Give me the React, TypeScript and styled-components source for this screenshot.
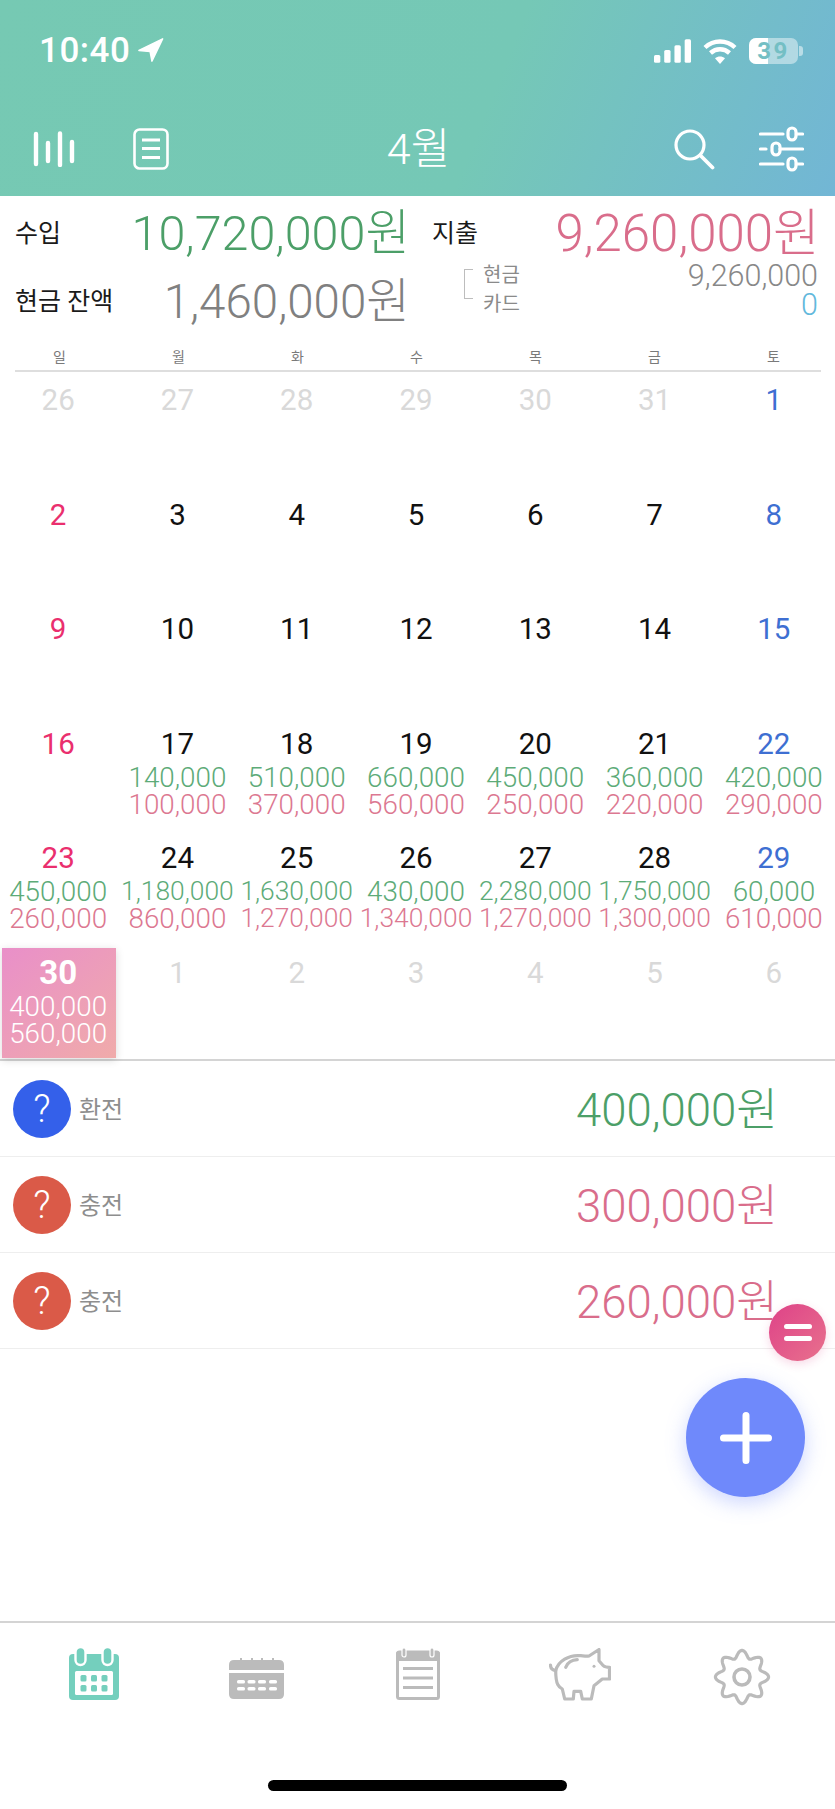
import React from "react";
import styled, { createGlobalStyle } from "styled-components";

type DayKind = "normal" | "sun" | "sat" | "muted";

interface DayData {
  day: number;
  kind: DayKind;
  income?: string;
  expense?: string;
  selected?: boolean;
}

const FONT = `Roboto, "Noto Sans CJK KR", "Liberation Sans", sans-serif`;

const GREEN = "#4c9f68";
const RED = "#d96d8b";

const DAYS: DayData[] = [
  { day: 26, kind: "muted" },
  { day: 27, kind: "muted" },
  { day: 28, kind: "muted" },
  { day: 29, kind: "muted" },
  { day: 30, kind: "muted" },
  { day: 31, kind: "muted" },
  { day: 1, kind: "sat" },
  { day: 2, kind: "sun" },
  { day: 3, kind: "normal" },
  { day: 4, kind: "normal" },
  { day: 5, kind: "normal" },
  { day: 6, kind: "normal" },
  { day: 7, kind: "normal" },
  { day: 8, kind: "sat" },
  { day: 9, kind: "sun" },
  { day: 10, kind: "normal" },
  { day: 11, kind: "normal" },
  { day: 12, kind: "normal" },
  { day: 13, kind: "normal" },
  { day: 14, kind: "normal" },
  { day: 15, kind: "sat" },
  { day: 16, kind: "sun" },
  { day: 17, kind: "normal", income: "140,000", expense: "100,000" },
  { day: 18, kind: "normal", income: "510,000", expense: "370,000" },
  { day: 19, kind: "normal", income: "660,000", expense: "560,000" },
  { day: 20, kind: "normal", income: "450,000", expense: "250,000" },
  { day: 21, kind: "normal", income: "360,000", expense: "220,000" },
  { day: 22, kind: "sat", income: "420,000", expense: "290,000" },
  { day: 23, kind: "sun", income: "450,000", expense: "260,000" },
  { day: 24, kind: "normal", income: "1,180,000", expense: "860,000" },
  { day: 25, kind: "normal", income: "1,630,000", expense: "1,270,000" },
  { day: 26, kind: "normal", income: "430,000", expense: "1,340,000" },
  { day: 27, kind: "normal", income: "2,280,000", expense: "1,270,000" },
  { day: 28, kind: "normal", income: "1,750,000", expense: "1,300,000" },
  { day: 29, kind: "sat", income: "60,000", expense: "610,000" },
  { day: 30, kind: "sun", income: "400,000", expense: "560,000", selected: true },
  { day: 1, kind: "muted" },
  { day: 2, kind: "muted" },
  { day: 3, kind: "muted" },
  { day: 4, kind: "muted" },
  { day: 5, kind: "muted" },
  { day: 6, kind: "muted" },
];

const WEEK = ["일", "월", "화", "수", "목", "금", "토"];

const ENTRIES = [
  { name: "환전", amount: "400,000원", income: true },
  { name: "충전", amount: "300,000원", income: false },
  { name: "충전", amount: "260,000원", income: false },
];

const DAY_COLORS: Record<DayKind, string> = {
  normal: "#111111",
  sun: "#ea2f6e",
  sat: "#3e6fd2",
  muted: "#d9d9d9",
};

// wavy gear outline, 8 lobes
function gearPath() {
  const pts: string[] = [];
  for (let i = 0; i < 160; i++) {
    const a = (i / 160) * Math.PI * 2;
    const r = 23 + 3.6 * Math.cos(a * 8);
    pts.push(`${(29 + r * Math.sin(a)).toFixed(2)},${(29 - r * Math.cos(a)).toFixed(2)}`);
  }
  return `M${pts.join("L")}Z`;
}

function App() {
  return (
    <Page>
      <GlobalStyle />
      <Header>
        <StatusBar>
          <Clock>
            10:40
            <svg width="26" height="26" viewBox="0 0 28 26">
              <path d="M26.5 1 L1 13.5 L13 14.5 L15 25 Z" fill="#fff" stroke="#fff" strokeWidth="1.6" strokeLinejoin="round" />
            </svg>
          </Clock>
          <StatusIcons>
            <svg width="37" height="24" viewBox="0 0 38 24" fill="#fff">
              <rect x="0" y="16" width="6.5" height="8" rx="1.6" />
              <rect x="10.5" y="11" width="6.5" height="13" rx="1.6" />
              <rect x="21" y="6" width="6.5" height="18" rx="1.6" />
              <rect x="31.5" y="0" width="6.5" height="24" rx="1.6" />
            </svg>
            <svg width="34" height="25" viewBox="0 0 34 25" fill="none" stroke="#fff" strokeWidth="4.4">
              <path d="M2 8.5 C10.5 0.5 23.5 0.5 32 8.5" />
              <path d="M7.5 14 C13 9 21 9 26.5 14" />
              <path d="M17 25 L12 19.2 C15 17 19 17 22 19.2 Z" fill="#fff" stroke="none" />
            </svg>
            <Battery>
              <BatteryFill />
              <BatteryLabel>39</BatteryLabel>
              <BatteryNub />
            </Battery>
          </StatusIcons>
        </StatusBar>
        <ToolBar>
          <ToolGroup>
            <svg width="44" height="36" viewBox="0 0 44 36" stroke="#fff" strokeWidth="4.4" strokeLinecap="round">
              <path d="M3 3 V33 M15 12 V30 M27 2.5 V34 M39 11 V30" />
            </svg>
            <svg width="36" height="42" viewBox="0 0 36 42" fill="none" stroke="#fff" strokeWidth="2.6">
              <rect x="1.5" y="1.5" width="33" height="39" rx="5" />
              <path d="M9 12 H27 M9 20.5 H27 M9 29.5 H27" strokeWidth="2.8" />
            </svg>
          </ToolGroup>
          <MonthTitle>4월</MonthTitle>
          <ToolGroup $right>
            <svg width="42" height="42" viewBox="0 0 42 42" fill="none" stroke="#fff" strokeWidth="3.2">
              <circle cx="17" cy="17" r="14" />
              <path d="M27.5 27.5 L39.5 39.5" strokeLinecap="round" strokeWidth="3.8" />
            </svg>
            <svg width="45" height="46" viewBox="0 0 45 46" fill="none" stroke="#fff" strokeWidth="3.2" strokeLinecap="round">
              <path d="M1.5 8 H24 M38 8 H43.5" />
              <rect x="29" y="2" width="8" height="12" rx="4" />
              <path d="M1.5 23 H7 M21 23 H43.5" />
              <rect x="13" y="17" width="8" height="12" rx="4" />
              <path d="M1.5 38 H24 M38 38 H43.5" />
              <rect x="29" y="32" width="8" height="12" rx="4" />
            </svg>
          </ToolGroup>
        </ToolBar>
      </Header>

      <Summary>
        <SummaryColumn>
          <SummaryRow>
            <SummaryLabel>수입</SummaryLabel>
            <BigAmount $color={GREEN} $size={48.5}>10,720,000원</BigAmount>
          </SummaryRow>
          <SummaryRow $gap={16}>
            <SummaryLabel>현금 잔액</SummaryLabel>
            <BigAmount $color="#808080" $size={47.5}>1,460,000원</BigAmount>
          </SummaryRow>
        </SummaryColumn>
        <SummaryColumn>
          <SummaryRow>
            <SummaryLabel>지출</SummaryLabel>
            <BigAmount $color={RED} $size={51}>9,260,000원</BigAmount>
          </SummaryRow>
          <PayBreakdown>
            <Bracket />
            <PayNames>
              <span>현금</span>
              <span>카드</span>
            </PayNames>
            <PayValues>
              <PayValue $color="#888888">9,260,000</PayValue>
              <PayValue $color="#62b8dc">0</PayValue>
            </PayValues>
          </PayBreakdown>
        </SummaryColumn>
      </Summary>

      <WeekHeader>
        {WEEK.map((w) => (
          <WeekLabel key={w}>{w}</WeekLabel>
        ))}
      </WeekHeader>
      <WeekRule />

      <Calendar>
        {DAYS.map((d, i) => (
          <Cell key={i} $selected={d.selected}>
            <DayNumber $kind={d.kind} $selected={d.selected}>
              {d.day}
            </DayNumber>
            {d.income && (
              <CellAmount $color={d.selected ? "#fff" : "#5dab78"} $long={d.income.length > 7}>
                {d.income}
              </CellAmount>
            )}
            {d.expense && (
              <CellAmount $color={d.selected ? "#fff" : "#dc7891"} $long={d.expense.length > 7}>
                {d.expense}
              </CellAmount>
            )}
          </Cell>
        ))}
      </Calendar>

      <EntryList>
        {ENTRIES.map((e, i) => (
          <EntryRow key={i}>
            <EntryIcon $income={e.income}>?</EntryIcon>
            <EntryName>{e.name}</EntryName>
            <EntryAmount $color={e.income ? GREEN : RED}>{e.amount}</EntryAmount>
          </EntryRow>
        ))}
      </EntryList>

      <TotalButton>
        <svg width="30" height="18" viewBox="0 0 30 18" fill="#fff">
          <rect x="1" y="0" width="28" height="5" rx="2.5" />
          <rect x="1" y="12" width="28" height="5" rx="2.5" />
        </svg>
      </TotalButton>
      <AddButton>
        <svg width="54" height="54" viewBox="0 0 54 54" stroke="#fff" strokeWidth="7" strokeLinecap="round">
          <path d="M27 4.5 V49.5 M4.5 27 H49.5" />
        </svg>
      </AddButton>

      <BottomNav>
        <NavItem>
          <svg width="50" height="52" viewBox="0 0 50 52">
            <path d="M4 6 H46 Q50 6 50 10 V48 Q50 52 46 52 H4 Q0 52 0 48 V10 Q0 6 4 6 Z" fill="#74cfbd" />
            <rect x="6.5" y="-1" width="10" height="18" rx="5" fill="#74cfbd" stroke="#fff" strokeWidth="2.4" />
            <rect x="33.5" y="-1" width="10" height="18" rx="5" fill="#74cfbd" stroke="#fff" strokeWidth="2.4" />
            <rect x="6" y="23" width="38" height="24" rx="1.5" fill="#fff" />
            <g fill="#74cfbd">
              <rect x="11.5" y="27" width="6" height="6.5" rx="1.5" />
              <rect x="22" y="27" width="6" height="6.5" rx="1.5" />
              <rect x="32.5" y="27" width="6" height="6.5" rx="1.5" />
              <rect x="11.5" y="37" width="6" height="6.5" rx="1.5" />
              <rect x="22" y="37" width="6" height="6.5" rx="1.5" />
              <rect x="32.5" y="37" width="6" height="6.5" rx="1.5" />
            </g>
          </svg>
        </NavItem>
        <NavItem $top={35}>
          <svg width="55" height="42" viewBox="0 0 55 42" fill="#bbbbbb">
            <path d="M5 2 H50 Q55 2 55 7 V12 H0 V7 Q0 2 5 2 Z" />
            <rect x="11" y="0" width="2" height="4" />
            <rect x="22" y="0" width="2" height="4" />
            <rect x="32" y="0" width="2" height="4" />
            <rect x="43" y="0" width="2" height="4" />
            <path d="M0 15 H55 V36 Q55 41 50 41 H5 Q0 41 0 36 Z" />
            <g fill="#fff">
              <rect x="8" y="22" width="8" height="3.6" rx="1.6" />
              <rect x="18.5" y="22" width="8" height="3.6" rx="1.6" />
              <rect x="29" y="22" width="8" height="3.6" rx="1.6" />
              <rect x="40" y="22" width="8" height="3.6" rx="1.6" />
              <rect x="8" y="29" width="8" height="3.6" rx="1.6" />
              <rect x="18.5" y="29" width="8" height="3.6" rx="1.6" />
              <rect x="29" y="29" width="8" height="3.6" rx="1.6" />
              <rect x="40" y="29" width="8" height="3.6" rx="1.6" />
            </g>
          </svg>
        </NavItem>
        <NavItem>
          <svg width="44" height="52" viewBox="0 0 44 52">
            <path d="M3 3 H41 Q44 3 44 6 V13 H0 V6 Q0 3 3 3 Z" fill="#bbbbbb" />
            <rect x="1.5" y="4" width="41" height="46.5" rx="2" fill="none" stroke="#bbbbbb" strokeWidth="3" />
            <rect x="6" y="0" width="4" height="9" rx="2" fill="#bbbbbb" stroke="#fff" strokeWidth="1.2" />
            <rect x="34" y="0" width="4" height="9" rx="2" fill="#bbbbbb" stroke="#fff" strokeWidth="1.2" />
            <path d="M7 20.5 H37 M7 30 H37 M7 39.5 H37" stroke="#bbbbbb" strokeWidth="3" />
          </svg>
        </NavItem>
        <NavItem>
          <svg width="62" height="53" viewBox="0 0 62 53" fill="none" stroke="#bbbbbb" strokeWidth="3.2">
            <path
              d="M6.7 22.7 C9 13 20 6.5 31.7 7.7 C35 8 37.5 8.5 40 8 L50 1.5 V12.7 L54.3 17.7 C56 19.3 58 19.3 60.5 19.3 V31 H53.3 L45 37.7 L42.3 51 H33.3 L31.7 43.3 H25 L24.3 51 H15.7 L13.3 41 C10 39 6.7 37 6.7 22.7 Z"
              strokeLinejoin="round"
            />
            <path d="M6.7 22.7 C3 22 1.5 20 1.5 17" strokeLinecap="round" />
            <path d="M16.7 19.3 C18.5 15 22.5 12 28.3 11.7" strokeLinecap="round" />
            <circle cx="45" cy="18.3" r="1.5" fill="#bbbbbb" stroke="none" />
          </svg>
        </NavItem>
        <NavItem>
          <svg width="58" height="58" viewBox="0 0 58 58" fill="none" stroke="#bbbbbb" strokeWidth="3.2">
            <path d={gearPath()} strokeLinejoin="round" />
            <circle cx="29" cy="29" r="8" strokeWidth="3.6" />
          </svg>
        </NavItem>
      </BottomNav>
      <HomeBarRow>
        <HomeBar />
      </HomeBarRow>
    </Page>
  );
}

const GlobalStyle = createGlobalStyle`
  html, body {
    margin: 0;
    padding: 0;
    background: #fff;
  }
  * {
    box-sizing: border-box;
  }
`;

const Page = styled.div`
  position: relative;
  width: 835px;
  height: 1809px;
  overflow: hidden;
  display: flex;
  flex-direction: column;
  background: #fff;
  font-family: ${FONT};
`;

const Header = styled.header`
  height: 196px;
  background: linear-gradient(112deg, #76c9b3 0%, #75c8b6 58%, #72b6d5 100%);
  color: #fff;
  padding: 36px 33px 0 33px;
`;

const StatusBar = styled.div`
  display: flex;
  justify-content: space-between;
  align-items: center;
  height: 30px;
`;

const Clock = styled.div`
  display: flex;
  align-items: center;
  gap: 8px;
  margin-left: 6px;
  margin-top: -2px;
  font-size: 35px;
  font-weight: 500;
  letter-spacing: 0.5px;
`;

const StatusIcons = styled.div`
  display: flex;
  align-items: center;
  gap: 12px;
  padding-right: 4px;
`;

const Battery = styled.div`
  position: relative;
  width: 49px;
  height: 26px;
  border-radius: 7px;
  background: rgba(255, 255, 255, 0.45);
`;

const BatteryFill = styled.div`
  position: absolute;
  left: 0;
  top: 0;
  bottom: 0;
  width: 19px;
  border-radius: 7px 0 0 7px;
  background: #fff;
`;

const BatteryLabel = styled.span`
  position: absolute;
  inset: 0;
  text-align: center;
  font-size: 24px;
  line-height: 26px;
  font-weight: 700;
  letter-spacing: 2.5px;
  color: #74bfc4;
`;

const BatteryNub = styled.div`
  position: absolute;
  right: -5px;
  top: 8px;
  width: 4px;
  height: 10px;
  border-radius: 0 3px 3px 0;
  background: rgba(255, 255, 255, 0.5);
`;

const ToolBar = styled.div`
  display: grid;
  grid-template-columns: 1fr auto 1fr;
  align-items: center;
  height: 46px;
  margin-top: 60px;
  margin-right: -2px;
`;

const ToolGroup = styled.div<{ $right?: boolean }>`
  display: flex;
  align-items: center;
  justify-content: ${(p) => (p.$right ? "flex-end" : "flex-start")};
  gap: ${(p) => (p.$right ? "44px" : "56px")};
`;

const MonthTitle = styled.div`
  font-size: 43px;
  font-weight: 300;
  line-height: 46px;
`;

const Summary = styled.section`
  display: grid;
  grid-template-columns: 395px 388px;
  column-gap: 22px;
  padding: 12px 15px 0 15px;
  height: 149px;
`;

const SummaryColumn = styled.div`
  display: flex;
  flex-direction: column;
`;

const SummaryRow = styled.div<{ $gap?: number }>`
  display: flex;
  justify-content: space-between;
  align-items: center;
  height: 52px;
  margin-top: ${(p) => p.$gap ?? 0}px;
`;

const SummaryLabel = styled.span`
  font-size: 25px;
  line-height: 34px;
  color: #1a1a1a;
`;

const BigAmount = styled.span<{ $color: string; $size: number }>`
  font-size: ${(p) => p.$size}px;
  line-height: 52px;
  font-weight: 300;
  color: ${(p) => p.$color};
`;

const PayBreakdown = styled.div`
  display: flex;
  align-items: flex-start;
  margin-top: 1px;
`;

const Bracket = styled.div`
  width: 9px;
  height: 30px;
  margin: 8px 10px 0 32px;
  border: 1px solid #bdbdbd;
  border-right: none;
`;

const PayNames = styled.div`
  display: flex;
  flex-direction: column;
  font-size: 20px;
  line-height: 29px;
  color: #8a8a8a;
`;

const PayValues = styled.div`
  margin-left: auto;
  margin-right: 2px;
  display: flex;
  flex-direction: column;
  align-items: flex-end;
`;

const PayValue = styled.span<{ $color: string }>`
  font-size: 30.5px;
  font-weight: 300;
  line-height: 29px;
  color: ${(p) => p.$color};
`;

const WeekHeader = styled.div`
  display: grid;
  grid-template-columns: repeat(7, 1fr);
  height: 25px;
  padding-right: 2px;
`;

const WeekRule = styled.div`
  height: 2px;
  margin: 0 14px 0 15px;
  background: #dedede;
`;

const WeekLabel = styled.span`
  text-align: center;
  font-size: 14px;
  line-height: 24px;
  color: #7a7a7a;
`;

const Calendar = styled.div`
  display: grid;
  grid-template-columns: repeat(7, 1fr);
  grid-auto-rows: 114.5px;
  border-bottom: 2px solid #d4d4d4;
`;

const Cell = styled.div<{ $selected?: boolean }>`
  display: flex;
  flex-direction: column;
  align-items: center;
  padding-top: ${(p) => (p.$selected ? "5px" : "8px")};
  padding-right: ${(p) => (p.$selected ? "2px" : "3px")};
  margin: ${(p) => (p.$selected ? "3px 3px 1px 2px" : "0")};
  background: ${(p) => (p.$selected ? "linear-gradient(140deg, #e98fc9 0%, #f0abaa 100%)" : "transparent")};
  box-shadow: ${(p) => (p.$selected ? "0 2px 8px rgba(0, 0, 0, 0.15)" : "none")};
`;

const DayNumber = styled.div<{ $kind: DayKind; $selected?: boolean }>`
  font-size: ${(p) => (p.$selected ? "33px" : "29.5px")};
  line-height: 40px;
  font-weight: ${(p) => (p.$selected ? 700 : 400)};
  color: ${(p) => (p.$selected ? "#fff" : DAY_COLORS[p.$kind])};
`;

const CellAmount = styled.div<{ $color: string; $long?: boolean }>`
  font-size: ${(p) => (p.$long ? "26.4px" : "27.8px")};
  font-weight: 300;
  line-height: 27px;
  white-space: nowrap;
  color: ${(p) => p.$color};
`;

const EntryList = styled.section`
  display: flex;
  flex-direction: column;
`;

const EntryRow = styled.div`
  display: flex;
  align-items: center;
  height: 96px;
  padding: 0 57px 0 13px;
  border-bottom: 1px solid #eeeeee;
`;

const EntryIcon = styled.div<{ $income?: boolean }>`
  width: 58px;
  height: 58px;
  border-radius: 50%;
  display: flex;
  align-items: center;
  justify-content: center;
  background: ${(p) => (p.$income ? "#3460ea" : "#da5a48")};
  color: #fff;
  font-size: 38px;
  font-weight: 300;
`;

const EntryName = styled.span`
  margin-left: 8px;
  padding-bottom: 2px;
  font-size: 24px;
  color: #8e8e8e;
`;

const EntryAmount = styled.span<{ $color: string }>`
  margin-left: auto;
  padding-bottom: 5px;
  font-size: 45.5px;
  font-weight: 300;
  color: ${(p) => p.$color};
`;

const TotalButton = styled.div`
  position: absolute;
  left: 769px;
  top: 1304px;
  width: 57px;
  height: 57px;
  border-radius: 50%;
  display: flex;
  align-items: center;
  justify-content: center;
  background: linear-gradient(135deg, #de4288 0%, #e8718d 100%);
  box-shadow: 0 3px 10px rgba(222, 66, 136, 0.2);
`;

const AddButton = styled.div`
  position: absolute;
  left: 686px;
  top: 1378px;
  width: 119px;
  height: 119px;
  border-radius: 50%;
  display: flex;
  align-items: center;
  justify-content: center;
  background: #6f89fb;
  box-shadow: 0 6px 20px rgba(111, 137, 251, 0.35);
`;

const BottomNav = styled.nav`
  display: grid;
  grid-template-columns: repeat(5, 162px);
  margin-top: auto;
  padding: 0 13px;
  height: 133px;
  border-top: 2px solid #d4d4d4;
`;

const NavItem = styled.div<{ $top?: number }>`
  display: flex;
  justify-content: center;
  align-items: flex-start;
  padding-top: ${(p) => p.$top ?? 25}px;
`;

const HomeBarRow = styled.div`
  display: flex;
  justify-content: center;
  height: 55px;
  padding-top: 26px;
`;

const HomeBar = styled.div`
  width: 299px;
  height: 11px;
  border-radius: 6px;
  background: #000;
`;

export default App;
